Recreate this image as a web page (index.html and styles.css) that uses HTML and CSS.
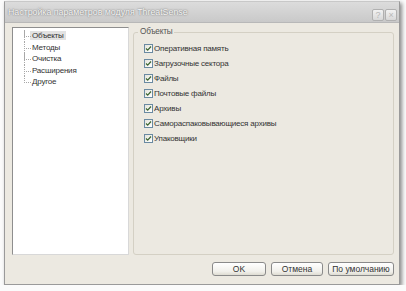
FILE: index.html
```html
<!DOCTYPE html>
<html lang="ru">
<head>
    <meta charset="UTF-8">
    <title>Настройка параметров модуля ThreatSense</title>
    <link rel="stylesheet" href="styles.css">
</head>
<body>
    <div class="window">
        <div class="titlebar">
            <span class="title">Настройка параметров модуля ThreatSense</span>
            <div class="title-buttons">
                <span class="tbtn">?</span>
                <span class="tbtn">&#215;</span>
            </div>
        </div>
        <div class="content">
            <div class="main">
                <ul class="tree">
                    <li class="selected"><span>Объекты</span></li>
                    <li><span>Методы</span></li>
                    <li><span>Очистка</span></li>
                    <li><span>Расширения</span></li>
                    <li class="last"><span>Другое</span></li>
                </ul>
                <fieldset class="group">
                    <legend>Объекты</legend>
                    <label class="check"><span class="box"><svg width="7" height="7" viewBox="0 0 7 7"><path d="M1 3.5 L2.7 5.2 L6 1.5" fill="none" stroke="#3c6630" stroke-width="1.2"/></svg></span>Оперативная память</label>
                    <label class="check"><span class="box"><svg width="7" height="7" viewBox="0 0 7 7"><path d="M1 3.5 L2.7 5.2 L6 1.5" fill="none" stroke="#3c6630" stroke-width="1.2"/></svg></span>Загрузочные сектора</label>
                    <label class="check"><span class="box"><svg width="7" height="7" viewBox="0 0 7 7"><path d="M1 3.5 L2.7 5.2 L6 1.5" fill="none" stroke="#3c6630" stroke-width="1.2"/></svg></span>Файлы</label>
                    <label class="check"><span class="box"><svg width="7" height="7" viewBox="0 0 7 7"><path d="M1 3.5 L2.7 5.2 L6 1.5" fill="none" stroke="#3c6630" stroke-width="1.2"/></svg></span>Почтовые файлы</label>
                    <label class="check"><span class="box"><svg width="7" height="7" viewBox="0 0 7 7"><path d="M1 3.5 L2.7 5.2 L6 1.5" fill="none" stroke="#3c6630" stroke-width="1.2"/></svg></span>Архивы</label>
                    <label class="check"><span class="box"><svg width="7" height="7" viewBox="0 0 7 7"><path d="M1 3.5 L2.7 5.2 L6 1.5" fill="none" stroke="#3c6630" stroke-width="1.2"/></svg></span>Самораспаковывающиеся архивы</label>
                    <label class="check"><span class="box"><svg width="7" height="7" viewBox="0 0 7 7"><path d="M1 3.5 L2.7 5.2 L6 1.5" fill="none" stroke="#3c6630" stroke-width="1.2"/></svg></span>Упаковщики</label>
                </fieldset>
            </div>
            <div class="buttons">
                <button class="btn btn-ok">OK</button>
                <button class="btn btn-cancel">Отмена</button>
                <button class="btn btn-default">По умолчанию</button>
            </div>
        </div>
    </div>
</body>
</html>
```
FILE: styles.css
```css
body {
    margin: 0;
    padding: 0;
    background-color: #fbfbfb;
    font-family: "Liberation Sans", Arial, sans-serif;
    font-size: 8px;
    letter-spacing: -0.2px;
    color: #333;
}
.window {
    margin: 1px 0 0 4px;
    width: 396px;
    height: 284px;
    border: 1px solid #9a9a9a;
    border-top-color: #c8c8c8;
    background-color: #ece9e1;
    box-shadow: 2px 2px 4px rgba(0, 0, 0, 0.45);
    display: flex;
    flex-direction: column;
    box-sizing: border-box;
}
.titlebar {
    height: 20px;
    display: flex;
    align-items: center;
    justify-content: space-between;
    padding: 0 2px 0 3px;
    background: linear-gradient(#dcdcdc, #c9c9c9);
    border-bottom: 1px solid #b8b8b8;
}
.title {
    color: #f6f6f6;
    font-size: 8.8px;
    letter-spacing: 0;
    text-shadow: 0 0 2px #7a7a7a, 0 0 1px #8a8a8a;
}
.title-buttons {
    display: flex;
    gap: 1px;
    margin-top: 5px;
}
.tbtn {
    width: 10px;
    height: 10px;
    border: 1px solid #b0b0b0;
    border-radius: 2px;
    background: linear-gradient(#f2f2f2, #d8d8d8);
    color: #b8b8b8;
    font-size: 9px;
    line-height: 10px;
    text-align: center;
}
.content {
    flex: 1;
    display: flex;
    flex-direction: column;
    padding: 4px 5px 8px 7px;
}
.main {
    flex: 1;
    display: flex;
    gap: 4px;
}
.tree {
    width: 117px;
    margin: 0;
    padding: 2px 0 0 0;
    list-style: none;
    background-color: #fff;
    border: 1px solid #8e8e8e;
    border-right-color: #d8d8d8;
    border-bottom-color: #d8d8d8;
    box-sizing: border-box;
}
.tree li {
    position: relative;
    height: 11.5px;
    line-height: 11.5px;
    padding-left: 19px;
    border-left: 1px dotted #a8a8a8;
    margin-left: 11px;
}
.tree li.last {
    border-left-color: transparent;
}
.tree li::before {
    content: "";
    position: absolute;
    left: -1px;
    top: 0;
    width: 6px;
    height: 6px;
    border-left: 1px dotted #a8a8a8;
    border-bottom: 1px dotted #a8a8a8;
}
.tree li span {
    padding: 0 2px;
    margin-left: -14px;
}
.tree li.selected span {
    background-color: #e2e2e2;
}
.group {
    flex: 1;
    margin: 0;
    padding: 4px 0 0 10px;
    border: 1px solid #d4d0c4;
    border-radius: 3px;
    display: flex;
    flex-direction: column;
}
.group legend {
    padding: 0 2px;
    margin-left: -6px;
    font-size: 8.2px;
    line-height: 10px;
    color: #555;
}
.check {
    display: flex;
    align-items: center;
    gap: 1px;
    height: 15px;
}
.box {
    width: 9px;
    height: 9px;
    box-sizing: border-box;
    border: 1px solid #6a8aa2;
    background: linear-gradient(135deg, #e4e4dc, #fff);
    display: flex;
    align-items: center;
    justify-content: center;
}
.buttons {
    display: flex;
    justify-content: flex-end;
    gap: 5px;
    margin-top: 7px;
}
.btn {
    height: 14px;
    padding: 0;
    white-space: nowrap;
    font-family: "Liberation Sans", Arial, sans-serif;
    font-size: 8.5px;
    color: #333;
    border: 1px solid #8a8a8a;
    border-radius: 3px;
    background: linear-gradient(#ffffff, #f1f0eb 70%, #dedcd2);
}
.btn-ok {
    width: 54px;
}
.btn-cancel {
    width: 52px;
}
.btn-default {
    width: 66px;
}
```
